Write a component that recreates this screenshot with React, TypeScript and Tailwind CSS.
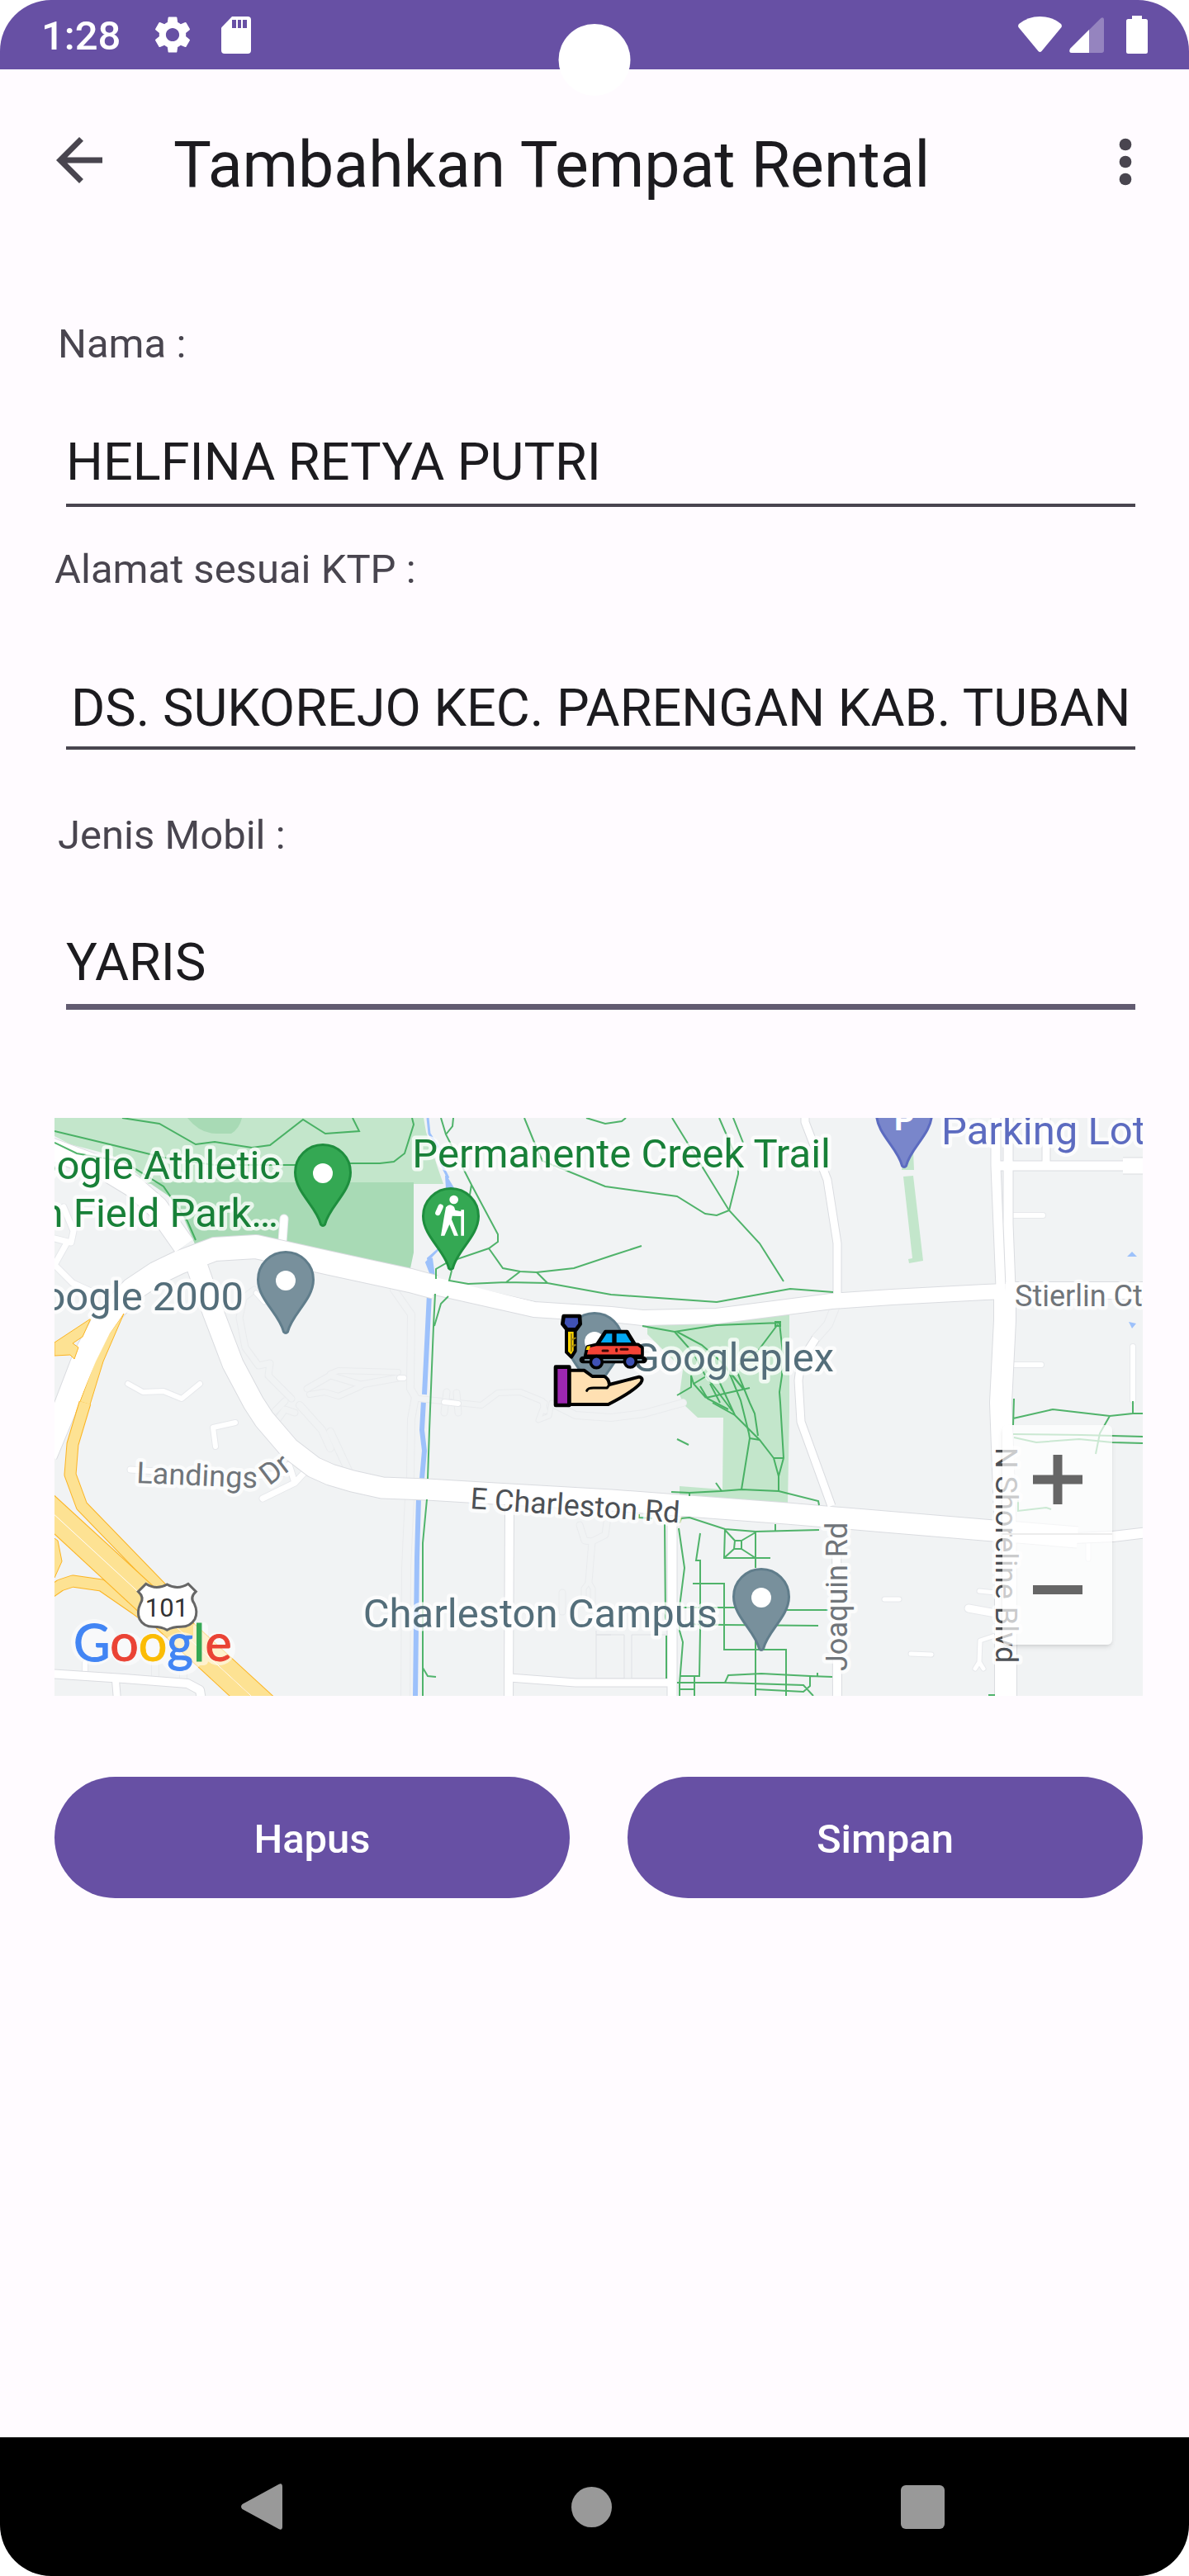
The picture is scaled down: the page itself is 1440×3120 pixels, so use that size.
import type { ReactNode } from "react";

const robotoFont = "font-[Roboto,'Noto_Sans',sans-serif]";

/* ---------- System bars ---------- */

function StatusBar() {
  return (
    <header className="relative flex h-[84px] items-center justify-between bg-[#6750a4] pr-[50px] pl-[50px] text-white">
      <div className="flex items-center">
        <span className="w-[132px] pt-1 text-[49px] leading-[56px] font-medium">1:28</span>
        <svg className="h-[54px] w-[54px]" viewBox="0 0 24 24" fill="currentColor" aria-label="Setelan">
          <path d="M19.14 12.94c.04-.3.06-.61.06-.94 0-.32-.02-.64-.07-.94l2.03-1.58c.18-.14.23-.41.12-.61l-1.92-3.32c-.12-.22-.37-.29-.59-.22l-2.39.96c-.5-.38-1.03-.7-1.62-.94l-.36-2.54c-.04-.24-.24-.41-.48-.41h-3.84c-.24 0-.43.17-.47.41l-.36 2.54c-.59.24-1.13.57-1.62.94l-2.39-.96c-.22-.08-.47 0-.59.22L2.74 8.87c-.12.21-.08.47.12.61l2.03 1.58c-.05.3-.09.63-.09.94s.02.64.07.94l-2.03 1.58c-.18.14-.23.41-.12.61l1.92 3.32c.12.22.37.29.59.22l2.39-.96c.5.38 1.03.7 1.62.94l.36 2.54c.05.24.24.41.48.41h3.84c.24 0 .44-.17.47-.41l.36-2.54c.59-.24 1.13-.56 1.62-.94l2.39.96c.22.08.47 0 .59-.22l1.92-3.32c.12-.22.07-.47-.12-.61l-2.01-1.58zM12 15.6c-1.98 0-3.6-1.62-3.6-3.6s1.62-3.6 3.6-3.6 3.6 1.62 3.6 3.6-1.62 3.6-3.6 3.6z" />
        </svg>
        <svg className="ml-8 h-[45px] w-9" viewBox="0 0 36 45" aria-label="Kartu SD">
          <path d="M13 0H32Q36 0 36 4V41Q36 45 32 45H4Q0 45 0 41V13.500Z" fill="#fff" />
          <path d="M13 4h5v10h-5zM20 4h4v10h-4zM26 4h5v10h-5z" fill="#6750a4" />
        </svg>
      </div>
      <div className="absolute top-[29px] left-1/2 size-[87px] -translate-x-1/2 rounded-full bg-white" />
      <div className="flex items-center">
        <svg className="h-[44px] w-[53px]" viewBox="0 0 53 44" fill="#fff" aria-label="Wi-Fi">
          <path d="M1 9Q12 0 26.500 0T52 9Q53.500 11 52.500 13L28.500 42Q26.500 44 24.500 42L.5 13Q-.5 11 1 9Z" />
        </svg>
        <svg className="ml-[9px] h-[43px] w-[42px]" viewBox="0 0 42 43" fill="#fff" aria-label="Sinyal">
          <path d="M1 38 38.500.8Q42-1 42 3V40Q42 43 39 43H3Q-1 43 1 38Z" opacity=".3" />
          <path d="M1 38 24 15V43H3Q-1 43 1 38Z" />
        </svg>
        <svg className="ml-[27px] h-[46px] w-[26px]" viewBox="0 0 26 46" fill="#fff" aria-label="Baterai">
          <path d="M7 0H19V4H23.500Q26 4 26 6.500V43.500Q26 46 23.500 46H2.500Q0 46 0 43.500V6.500Q0 4 2.500 4H7Z" />
        </svg>
      </div>
    </header>
  );
}

function NavigationBar() {
  return (
    <nav className="flex h-[168px] items-center justify-between bg-black pr-[296px] pl-[292px]">
      <button type="button" aria-label="Kembali">
        <svg className="h-14 w-[50px]" viewBox="0 0 50 56" fill="#999">
          <path d="M45.500 1Q50-1.500 50 4V52Q50 57.500 45.500 55L1.500 31Q-1.500 28 1.500 25Z" />
        </svg>
      </button>
      <button type="button" aria-label="Beranda" className="size-[49px] rounded-full bg-[#999]" />
      <button type="button" aria-label="Aplikasi terbaru" className="size-[53px] rounded-md bg-[#999]" />
    </nav>
  );
}

/* ---------- App bar and form ---------- */

function AppBar() {
  return (
    <div className="flex h-[224px] items-center pr-[35px] pl-[54px] text-[#49454f]">
      <button type="button" aria-label="Navigasi naik">
        <svg className="size-[84px]" viewBox="0 .6 24 24" fill="currentColor">
          <path d="M20 11H7.830l5.590-5.590L12 4l-8 8 8 8 1.410-1.410L7.830 13H20z" />
        </svg>
      </button>
      <h1 className="ml-[72px] flex-1 pt-2 text-[77px] leading-[88px] text-[#1c1b1f]">Tambahkan Tempat Rental</h1>
      <button type="button" aria-label="Opsi lainnya">
        <svg className="size-[84px]" viewBox="0 0 24 24" fill="currentColor">
          <circle cx="12" cy="6" r="2.100" />
          <circle cx="12" cy="12" r="2.100" />
          <circle cx="12" cy="18" r="2.100" />
        </svg>
      </button>
    </div>
  );
}

type FieldProps = { id: string; label: string; value: string; labelClass: string; inputClass: string };

function Field({ id, label, value, labelClass, inputClass }: FieldProps) {
  return (
    <div className="flex flex-col">
      <label htmlFor={id} className={`text-[49px] leading-[56px] text-[#49454f] ${labelClass}`}>
        {label}
      </label>
      <input
        id={id}
        type="text"
        defaultValue={value}
        className={`mr-[9px] ml-[14px] min-w-0 bg-transparent text-[63px] text-[#1c1b1f] outline-none ${inputClass}`}
      />
    </div>
  );
}

/* ---------- Map ---------- */

type Road = { d: string; w: number };

const paths: Road[] = [
  { d: "M308 1563L295 1573L290 1597L297 1633L313 1655L327 1652L325 1667L353 1695", w: 7 },
  { d: "M372 1683L400 1667L437 1678L482 1670", w: 7 },
  { d: "M375 1690L393 1687L410 1692L437 1680", w: 6 },
  { d: "M400 1665L410 1661L482 1663", w: 6 },
  { d: "M477 1563L498 1593L497 1683L503 1693L498 1720L497 1790", w: 8 },
  { d: "M496 1815L492 1900L491 2055", w: 10 },
  { d: "M507 1695L583 1703L603 1688L630 1687L657 1698L660 1710", w: 6 },
  { d: "M673 1703L697 1715L740 1718L780 1713L827 1700", w: 8 },
  { d: "M541 1687L538 1712M553 1688L555 1712", w: 7 },
  { d: "M660 1700L652 1721L665 1716L668 1700", w: 5 },
  { d: "M702 1848L708 1867L717 1868L733 1860L735 1845M717 1868L713 1917", w: 7 },
  { d: "M713 1917L707 1925V1943M713 1917L718 1925V1943", w: 5 },
  { d: "M681 1930V1953", w: 7 },
  { d: "M400 1735L422 1782M363 1703L390 1733L400 1755", w: 8 },
  { d: "M335 1722L345 1708L357 1712M333 1710L345 1698", w: 7 },
  { d: "M1011 1585L1003 1605L988 1622", w: 10 },
  { d: "M188 2013V2032M222 2020V2036", w: 8 },
];

const roads: Road[] = [
  { d: "M60 1392L127 1417L160 1437L190 1463L223 1510", w: 26 },
  { d: "M55 1763L80 1703L103 1643L128 1597L160 1563L190 1543L217 1530L260 1514L310 1511L400 1531L497 1552L527 1560", w: 28 },
  { d: "M497 1555L527 1560L647 1587L740 1593L778 1597L868 1595L1007 1577L1080 1572L1193 1566L1218 1565", w: 18 },
  { d: "M1218 1564H1390", w: 20 },
  { d: "M237 1530L258 1590L282 1653L307 1700L320 1720L350 1755L380 1778L400 1787L427 1795L463 1803L517 1805L600 1810L740 1818L953 1834L1060 1843L1203 1855L1233 1857L1305 1863", w: 25 },
  { d: "M1300 1864L1348 1862L1390 1857", w: 12 },
  { d: "M1206 1350V1413L1212 1560", w: 11 },
  { d: "M1221 1350V1483L1224 1560", w: 11 },
  { d: "M1217 1565V1600L1212 1700L1217 1833L1218 1933V2060", w: 26 },
  { d: "M1208 1413H1390", w: 11 },
  { d: "M1360 1413H1390", w: 19 },
  { d: "M1267 1350V1413", w: 9 },
  { d: "M975 1350V1360L1002 1430L1014 1507V1570", w: 9 },
  { d: "M988 1622L970 1650L967 1673L970 1723L1007 1825", w: 9 },
  { d: "M1013 1845L1014 2060", w: 10 },
  { d: "M814 1840V2060", w: 11 },
  { d: "M617 1822L616 2060", w: 10 },
  { d: "M617 2033L697 2039H814", w: 9 },
  { d: "M60 2028L150 2034L227 2040L242 2048L244 2060", w: 10 },
  { d: "M140 2036L142 2060", w: 8 },
];

const alleys: Road[] = [
  { d: "M344 1477L342 1505", w: 9 },
  { d: "M77 1463L89 1492L86 1506L66 1501M80 1508L66 1533L88 1555L110 1565", w: 7 },
  { d: "M155 1677L173 1687L198 1686L220 1695L242 1677", w: 6 },
  { d: "M285 1724L258 1730L261 1753", w: 6 },
  { d: "M158 1781L300 1790L345 1785M318 1816L357 1797L370 1783M357 1797L350 1775", w: 7 },
  { d: "M310 1567L320 1578", w: 5 },
  { d: "M484 1670H489M538 1699L555 1701", w: 6 },
  { d: "M103 2015V2030", w: 6 },
  { d: "M1228 1473H1263M1228 1654H1261M1372 1632V1697", w: 6 },
  { d: "M1071 1938H1089M1103 2004L1128 2005M1186 1928L1206 1930", w: 5 },
  { d: "M1173 1949L1206 1955", w: 9 },
  { d: "M1205 1982L1187 1988L1186 2014M1186 2014L1181 2022M1186 2014L1191 2022", w: 5 },
  { d: "M1318 1870V1889", w: 5 },
];

const motorways: Road[] = [
  { d: "M103 1700L88 1750L85 1787L99 1825L193 1922L215 1945", w: 13 },
  { d: "M60 1930L73 1921L88 1916L123 1921L165 1950L185 1965", w: 13 },
];

const carriageways: Road[] = [
  { d: "M50 1810L328 2065", w: 17 },
  { d: "M50 1832L302 2065", w: 17 },
];

const trails = [
  "M148 1355L193 1362L237 1387L260 1384L305 1391L327 1388L367 1357L394 1374L435 1371L427 1355",
  "M66 1371L137 1388L198 1403L260 1412H358L426 1410H460L477 1408L490 1398L501 1363L499 1355",
  "M66 1385L93 1398L150 1408L198 1438L227 1480L237 1503",
  "M527 1568L525 1607L523 1657L520 1733L518 1792M517 1817L512 1870V2055M512 2021L518 2031L528 2032",
  "M543 1571L534 1580L526 1607",
  "M528 1550V1538L542 1530L592 1513L603 1505V1496L571 1436L540 1375L534 1355M571 1436L569 1448M540 1375L548 1365L549 1355",
  "M592 1513L609 1537L630 1541L650 1542L695 1537L740 1522L777 1510",
  "M547 1540L544 1552L567 1556L613 1554L663 1555L740 1569L868 1578L957 1562L1009 1566M613 1554L630 1541M650 1542L663 1555",
  "M635 1355L646 1382L657 1407L733 1438L820 1450L854 1471L868 1473L883 1467L894 1423V1408L871 1355",
  "M814 1355L883 1467L920 1507L949 1553M888 1355L900 1385M710 1355L733 1362L753 1359L758 1355",
  "M778 1607L817 1614L868 1606L946 1603M942 1605L918 1637L893 1655M939 1602H945V1607H939Z",
  "M817 1614L840 1640L853 1665L887 1710M820 1614L850 1630L873 1650L900 1683",
  "M944 1603L948 1640L947 1667L944 1687L945 1700L949 1767L943 1789V1807M937 1767H949M937 1767L943 1789",
  "M863 1700L890 1715L920 1745L937 1767M908 1743L898 1805M908 1743L920 1745",
  "M860 1677L872 1700M870 1672L890 1715M883 1663L897 1697L907 1737L908 1743M893 1663L908 1700L914 1713L918 1740M878 1655L900 1683",
  "M855 1694L908 1682M855 1694L840 1677L837 1667V1681L820 1691M848 1680L857 1695L882 1708M840 1677L855 1668",
  "M813 1808L835 1809L873 1807L898 1805L943 1807L991 1819L992 1824M867 1797L874 1807M835 1809V1813M820 1744L834 1751",
  "M823 1846L825 1840L835 1839L878 1853L915 1856L992 1854M939 1847V1855M774 1835V1839L790 1840",
  "M878 1853L877 1888H933M915 1856V1900M890 1867H898V1877H889ZM878 1854L890 1867M915 1857L898 1867M877 1888L889 1877M915 1888L898 1877",
  "M805 1847L806 1963M807 1982V2034M822 1852L829 1900L823 1947V1976L827 1990L823 2040V2055",
  "M848 1858L843 1891H848V1976L847 2031H823M839 1919H877V1999H952V2055",
  "M827 1948H890M953 1951H1003M830 1968L877 1969L991 1970M915 1983V2055M841 2031V2055",
  "M820 2039H878L973 2042L985 2055M878 2039L882 2030L922 2028L981 2031L1008 2032M981 2031V2043L973 2050L915 2047M990 2027V2032M823 2047H841",
  "M1228 1695L1227 1727M1227 1719L1275 1708L1344 1716L1372 1713H1384M1372 1698V1713M1344 1716L1332 1737L1327 1762",
  "M1227 1738L1310 1739L1384 1741M1228 1742L1255 1748L1307 1744L1347 1748L1384 1749M1233 1818V1831L1267 1827L1273 1829M1197 2054H1205",
];

function Roads({ list, casing, fill, cap = "butt" }: { list: Road[]; casing: string; fill: string; cap?: "butt" | "round" }) {
  return (
    <g fill="none" strokeLinejoin="round" strokeLinecap={cap}>
      {list.map((r) => (
        <path key={`c${r.d}`} d={r.d} stroke={casing} strokeWidth={r.w + 2} />
      ))}
      {list.map((r) => (
        <path key={r.d} d={r.d} stroke={fill} strokeWidth={r.w} />
      ))}
    </g>
  );
}

function Pin({ x, y, fill, stroke, children }: { x: number; y: number; fill: string; stroke: string; children?: ReactNode }) {
  return (
    <g transform={`translate(${x} ${y})`}>
      <path
        d="M-2.500-3C-7-24-33.500-42-33.500-66A33.500 33.500 0 0 1 33.500-66C33.500-42 7-24 2.500-3Q0 0-2.500-3Z"
        fill={fill}
        stroke={stroke}
        strokeWidth="3"
      />
      {children ?? <circle cy="-65" r="12" fill="#fff" />}
    </g>
  );
}

function RentalMarker() {
  return (
    <g transform="translate(400 1350) scale(.33333)" strokeLinejoin="round" strokeLinecap="round">
      <path d="M858 785H890V862L876 884L858 866Z" fill="#ffd600" stroke="#000" strokeWidth="12" />
      <path d="M876 800V862M890 815L880 820M890 840L880 845" stroke="#9c8412" strokeWidth="6" />
      <path d="M848 735H906L908 764L893 784H860L844 764Z" fill="#3f51b5" stroke="#000" strokeWidth="14" />
      <path d="M970 838L1000 792H1078L1106 838Z" fill="#03a9f4" stroke="#000" strokeWidth="14" />
      <path d="M1036 792V838M1028 792V838" stroke="#000" strokeWidth="8" />
      <path d="M926 880L934 846L968 838H1118L1134 850V880Z" fill="#f44336" stroke="#000" strokeWidth="11" />
      <path d="M929 858L933 845L945 843L941 858Z" fill="#ffd600" />
      <path d="M990 861H1008M1056 856H1080M1040 856V862" stroke="#3a0805" strokeWidth="9" />
      <path d="M918 894H1138" stroke="#000" strokeWidth="26" />
      <path d="M926 894H1130" stroke="#78909c" strokeWidth="6" />
      <circle cx="967" cy="902" r="21" fill="#3f51b5" stroke="#000" strokeWidth="11" />
      <circle cx="1090" cy="900" r="21" fill="#3f51b5" stroke="#000" strokeWidth="11" />
      <path
        d="M868 932H922L952 954H995Q1012 962 1014 984Q1046 976 1122 956Q1140 960 1128 978Q1100 1010 1010 1056H868Z"
        fill="#ffe0b2"
        stroke="#000"
        strokeWidth="12"
      />
      <path d="M932 1006Q936 996 956 996H1006L1016 982" fill="none" stroke="#000" strokeWidth="9" />
      <path d="M819 920H868V1059H819Z" fill="#9c27b0" stroke="#000" strokeWidth="14" />
    </g>
  );
}

function MapDrawing() {
  return (
    <svg className="block h-full w-full" viewBox="66 1355 1318 700" preserveAspectRatio="xMidYMid slice" role="img" aria-label="Peta lokasi">
      <rect x="0" y="1300" width="1500" height="800" fill="#f1f3f4" />

      <path d="M66 1355H513L516 1372L530 1415L537 1435H180L145 1404L120 1396L85 1387L66 1377Z" fill="#c3e6cb" />
      <path d="M227 1355Q242 1374 262 1374H280Q290 1368 293 1355Z" fill="#a8dab5" />
      <path d="M180 1433H501V1518L496 1542L400 1520L237 1510L222 1475L205 1450Z" fill="#a8dab5" />
      <path d="M784 1607L956 1590V1710L954 1824L823 1816V1801L875 1805L876 1718H845L828 1702L823 1690L827 1660L800 1633L784 1617Z" fill="#c3e6cb" />
      <path d="M1094 1426L1106 1425L1118 1528L1101 1531L1100 1526L1105 1525ZM1092 1418H1107L1106 1395H1095Z" fill="#c3e6cb" />

      <path d="M518 1355L520 1374L534 1395V1410L543 1428" fill="none" stroke="#9dc1fb" strokeWidth="3" />
      <path d="M540 1425L549 1440H541ZM533 1512L518 1525L523 1548L516 1530Z" fill="#9dc1fb" stroke="#9dc1fb" strokeWidth="2" />
      <path d="M521 1525L524 1548M520 1568L514 1690M513 1697L511 1733L514 1758L511 1792M507 1815L505 1887L503 2055" fill="none" stroke="#9dc1fb" strokeWidth="6" />
      <path d="M1365 1523L1371 1517L1377 1523ZM1367 1602L1376 1604L1371 1610Z" fill="#9dc1fb" />

      <Roads list={paths} casing="#e9ebed" fill="#f1f3f4" cap="round" />
      <path d="M722 1981H756V2034H722ZM765 1981H808V2034H765ZM722 1976V1981H740" fill="none" stroke="#dfe1e5" />

      <Roads list={alleys} casing="#e6e8eb" fill="#fff" cap="round" />
      <Roads list={roads} casing="#dadce0" fill="#fff" />
      <path d="M497 1541L540 1551L647 1578V1590L527 1568L497 1566Z" fill="#fff" />

      <g fill="#fde293" stroke="#fbb423">
        <path d="M66 1627L110 1598L100 1620L88 1628L95 1633L90 1647L85 1642L66 1643Z" />
        <path d="M150 1592L125 1650L106 1712H92L115 1650L132 1617Z" />
        <path d="M60 1860L70 1867L75 1892L66 1912L60 1915Z" />
      </g>
      <path d="M95 1701L116 1650L133 1616L149 1593L129 1613L90 1702Z" fill="#fff" />
      <Roads list={motorways} casing="#fbb423" fill="#fde293" />
      <Roads list={carriageways} casing="#fbb423" fill="#fde293" />
      <path d="M50 1821L315 2065" stroke="#fff" strokeWidth="1" />

      <g fill="none" stroke="#34a853" strokeWidth="2" opacity=".85">
        {trails.map((d) => (
          <path key={d} d={d} />
        ))}
      </g>

      <Pin x={391} y={1487} fill="#34a853" stroke="#1e8e3e" />
      <Pin x={346} y={1617} fill="#78909c" stroke="#607d8b" />
      <Pin x={922} y={2001} fill="#78909c" stroke="#607d8b" />
      <Pin x={720} y={1691} fill="#78909c" stroke="#607d8b" />
      <Pin x={546} y={1540} fill="#34a853" stroke="#1e8e3e">
        <g transform="translate(-146 -190) scale(.33333)" fill="#fff">
          <circle cx="449" cy="312" r="16" />
          <path d="M401 338L391 360" stroke="#fff" strokeWidth="19" strokeLinecap="round" />
          <path d="M420 340Q434 322 450 338L454 350L475 355V349H486V443H475V372L443 371L441 384L465 443H450L433 402L415 443H402L414 372Z" />
        </g>
      </Pin>
      <Pin x={1095} y={1416} fill="#7986cb" stroke="#5c6bc0">
        <text x="-12" y="-46" fontSize="38" fontWeight="700" fill="#fff">P</text>
      </Pin>

      <g strokeLinejoin="round" paintOrder="stroke" stroke="#fff" strokeOpacity=".75" strokeWidth="9">
        <g fontSize="49">
          <g fill="#188038" textAnchor="end">
            <text x="340" y="1429">Google Athletic</text>
            <text x="337" y="1487">n Field Park…</text>
            <text x="1006" y="1415">Permanente Creek Trail</text>
          </g>
          <g fill="#546e7a" textAnchor="end">
            <text x="295" y="1588">Google 2000</text>
            <text x="1010" y="1662">Googleplex</text>
            <text x="869" y="1972">Charleston Campus</text>
          </g>
          <text x="1140" y="1387" fill="#5c6bc0">Parking Lot</text>
        </g>
        <g fontSize="36" fill="#70757a">
          <text x="1229" y="1583">Stierlin Ct</text>
          <text transform="translate(165 1797) rotate(2.500)">Landings</text>
          <text transform="translate(326 1801) rotate(-37)">Dr</text>
          <text transform="translate(1026 2025) rotate(-90)">Joaquin Rd</text>
        </g>
        <g fontSize="36" fill="#4d5156">
          <text transform="translate(569 1828) rotate(3.900)">E Charleston Rd</text>
          <text transform="translate(1206 1754) rotate(90)">N Shoreline Blvd</text>
        </g>
      </g>

      <g transform="translate(60 1700) scale(.33333)">
        <path
          d="M350 658Q388 682 427 660Q466 682 504 658L532 686Q508 708 526 730Q540 760 528 786Q512 814 478 814Q446 814 427 826Q408 814 376 814Q342 814 327 786Q316 760 330 730Q346 708 322 686Z"
          fill="#fff"
          stroke="#666"
          strokeWidth="9"
        />
      </g>
      <text x="202" y="1959" fontSize="31" textAnchor="middle" fill="#333">101</text>

      <g opacity=".55" fill="#fff">
        <circle cx="114" cy="1990" r="28" />
        <circle cx="154" cy="1998" r="20" />
        <circle cx="187" cy="1998" r="20" />
        <circle cx="220" cy="2004" r="26" />
        <rect x="234" y="1966" width="18" height="52" rx="5" />
        <circle cx="265" cy="1998" r="20" />
      </g>
      <text x="89" y="2013" fontSize="61" fontFamily="Lato, sans-serif" strokeWidth="1">
        <tspan fill="#4285f4" stroke="#4285f4">G</tspan>
        <tspan fill="#ea4335" stroke="#ea4335">o</tspan>
        <tspan fill="#fbbc04" stroke="#fbbc04">o</tspan>
        <tspan fill="#4285f4" stroke="#4285f4">g</tspan>
        <tspan fill="#34a853" stroke="#34a853">l</tspan>
        <tspan fill="#ea4335" stroke="#ea4335">e</tspan>
      </text>

      <RentalMarker />
    </svg>
  );
}

function MapView() {
  return (
    <section className="relative mt-[131px] h-[700px] overflow-hidden">
      <MapDrawing />
      <div className="absolute right-[37px] bottom-[62px] flex w-[133px] flex-col divide-y-2 divide-[#ececec] rounded-md bg-white/70 shadow-md">
        <button type="button" aria-label="Perbesar" className="flex h-[133px] items-center justify-center">
          <svg className="size-[60px]" viewBox="0 0 60 60" fill="#666">
            <path d="M24.500 0h11v24.500H60v11H35.500V60h-11V35.500H0v-11h24.500z" />
          </svg>
        </button>
        <button type="button" aria-label="Perkecil" className="flex h-[133px] items-center justify-center">
          <span className="h-[11px] w-[60px] bg-[#666]" />
        </button>
      </div>
    </section>
  );
}

/* ---------- Screen ---------- */

function FilledButton({ children }: { children: ReactNode }) {
  return (
    <button type="button" className="h-[147px] flex-1 rounded-full bg-[#6750a4] pt-1 text-[49px] leading-[56px] font-medium text-white">
      {children}
    </button>
  );
}

export default function App() {
  return (
    <div className="min-h-screen bg-white">
      <div className={`flex min-h-screen flex-col overflow-hidden rounded-[62px] bg-[#fffbff] ${robotoFont}`}>
        <StatusBar />
        <AppBar />
        <main className="flex-1 pr-14 pb-16 pl-[66px]">
          <form onSubmit={(e) => e.preventDefault()}>
            <Field id="nama" label="Nama :" value="HELFINA RETYA PUTRI" labelClass="mt-[81px] ml-1" inputClass="mt-16 h-[105px] border-b-4 border-[#49454f]" />
            <Field
              id="alamat"
              label="Alamat sesuai KTP :"
              value="DS. SUKOREJO KEC. PARENGAN KAB. TUBAN"
              labelClass="mt-12"
              inputClass="mt-[92px] h-[98px] border-b-4 border-[#49454f] pl-[6px]"
            />
            <Field id="jenis" label="Jenis Mobil :" value="YARIS" labelClass="mt-[76px] ml-1" inputClass="mt-[75px] h-[108px] border-b-[7px] border-[#625b71]" />
            <MapView />
            <div className="mt-[98px] flex gap-[70px]">
              <FilledButton>Hapus</FilledButton>
              <FilledButton>Simpan</FilledButton>
            </div>
          </form>
        </main>
        <NavigationBar />
      </div>
    </div>
  );
}
